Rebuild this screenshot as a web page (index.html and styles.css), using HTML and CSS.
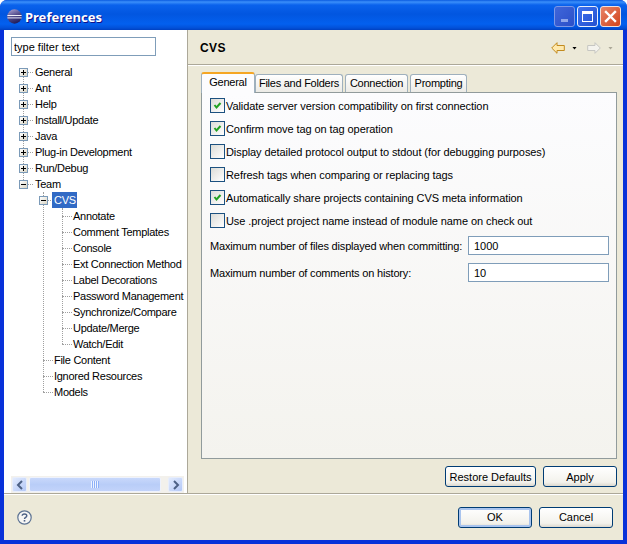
FILE: index.html
```html
<!DOCTYPE html>
<html lang="en">

<head>
    <meta charset="UTF-8">
    <meta name="viewport" content="width=device-width, initial-scale=1.0">
    <title>Preferences</title>
    <link rel="stylesheet" href="styles.css">
</head>

<body>
    <div class="window">
        <div class="titlebar">
            <svg class="app-icon" width="15" height="15" viewBox="0 0 15 15">
                <defs>
                    <linearGradient id="orb" x1="0.2" y1="0" x2="0.6" y2="1">
                        <stop offset="0" stop-color="#a79fd0" />
                        <stop offset="0.45" stop-color="#57508f" />
                        <stop offset="1" stop-color="#1f1a58" />
                    </linearGradient>
                </defs>
                <circle cx="7.5" cy="7.5" r="7.2" fill="url(#orb)" />
                <rect x="0.4" y="6" width="14.2" height="1" fill="#f0f0fa" />
                <rect x="0.4" y="8.4" width="14.2" height="1" fill="#e4e4f6" />
            </svg>
            <span class="title">Preferences</span>
            <div class="win-buttons">
                <div class="win-btn min"><span class="min-bar"></span></div>
                <div class="win-btn max"><span class="max-box"></span></div>
                <div class="win-btn close">
                    <svg width="13" height="13" viewBox="0 0 13 13">
                        <path d="M2 2 L11 11 M11 2 L2 11" stroke="#fff" stroke-width="2.4" stroke-linecap="square" />
                    </svg>
                </div>
            </div>
        </div>

        <div class="content">
            <div class="sidebar">
                <input class="filter" type="text" value="type filter text">
                <div class="tree-wrap">
                    <ul class="tree level-0">
                        <li><span class="toggle plus"></span><span class="label">General</span></li>
                        <li><span class="toggle plus"></span><span class="label">Ant</span></li>
                        <li><span class="toggle plus"></span><span class="label">Help</span></li>
                        <li><span class="toggle plus"></span><span class="label">Install/Update</span></li>
                        <li><span class="toggle plus"></span><span class="label">Java</span></li>
                        <li><span class="toggle plus"></span><span class="label">Plug-in Development</span></li>
                        <li><span class="toggle plus"></span><span class="label">Run/Debug</span></li>
                        <li><span class="toggle minus"></span><span class="label">Team</span>
                            <ul class="tree level-1">
                                <li><span class="toggle minus"></span><span class="label selected">CVS</span>
                                    <ul class="tree level-2">
                                        <li><span class="label">Annotate</span></li>
                                        <li><span class="label">Comment Templates</span></li>
                                        <li><span class="label">Console</span></li>
                                        <li><span class="label">Ext Connection Method</span></li>
                                        <li><span class="label">Label Decorations</span></li>
                                        <li><span class="label">Password Management</span></li>
                                        <li><span class="label">Synchronize/Compare</span></li>
                                        <li><span class="label">Update/Merge</span></li>
                                        <li><span class="label">Watch/Edit</span></li>
                                    </ul>
                                </li>
                                <li><span class="label">File Content</span></li>
                                <li><span class="label">Ignored Resources</span></li>
                                <li><span class="label">Models</span></li>
                            </ul>
                        </li>
                    </ul>
                </div>
                <div class="hscroll">
                    <div class="sb-btn">
                        <svg width="8" height="10" viewBox="0 0 8 10"><path d="M6 1 L2 5 L6 9" fill="none" stroke="#4d6185" stroke-width="2" /></svg>
                    </div>
                    <div class="sb-thumb"><span class="grip"></span></div>
                    <div class="sb-btn">
                        <svg width="8" height="10" viewBox="0 0 8 10"><path d="M2 1 L6 5 L2 9" fill="none" stroke="#4d6185" stroke-width="2" /></svg>
                    </div>
                </div>
            </div>

            <div class="main">
                <div class="page-header">
                    <h1>CVS</h1>
                    <div class="nav">
                        <svg width="14" height="12" viewBox="0 0 14 12">
                            <path d="M.7 6 L6 .7 V3.5 H13.3 V8.5 H6 V11.3 Z" fill="#ffe9ad" stroke="#c28b1e" />
                        </svg>
                        <span class="caret"></span>
                        <svg class="nav-fwd" width="14" height="12" viewBox="0 0 14 12">
                            <path d="M13.3 6 L8 .7 V3.5 H.7 V8.5 H8 V11.3 Z" fill="#f4f3ee" stroke="#c6c6c2" />
                        </svg>
                        <span class="caret off"></span>
                    </div>
                </div>

                <div class="page-body">
                    <div class="tabs">
                        <div class="tab active">General</div>
                        <div class="tab">Files and Folders</div>
                        <div class="tab">Connection</div>
                        <div class="tab">Prompting</div>
                    </div>
                    <div class="tab-panel">
                        <label class="check on">Validate server version compatibility on first connection</label>
                        <label class="check on">Confirm move tag on tag operation</label>
                        <label class="check">Display detailed protocol output to stdout (for debugging purposes)</label>
                        <label class="check">Refresh tags when comparing or replacing tags</label>
                        <label class="check on">Automatically share projects containing CVS meta information</label>
                        <label class="check">Use .project project name instead of module name on check out</label>
                        <div class="fields">
                            <span>Maximum number of files displayed when committing:</span>
                            <input type="text" value="1000">
                            <span>Maximum number of comments on history:</span>
                            <input type="text" value="10">
                        </div>
                    </div>
                    <div class="page-actions">
                        <button class="btn restore">Restore Defaults</button>
                        <button class="btn">Apply</button>
                    </div>
                </div>
            </div>
        </div>

        <div class="footer">
            <svg class="help" width="15" height="15" viewBox="0 0 15 15">
                <circle cx="7.5" cy="7.5" r="6.7" fill="#f6f6f4" stroke="#5d7393" stroke-width="1.2" />
                <path d="M5.2 5.8 C5.2 3.4 9.8 3.4 9.8 5.8 C9.8 7.4 7.5 7.4 7.5 9" fill="none" stroke="#4d6185" stroke-width="1.4" />
                <rect x="6.7" y="10" width="1.6" height="1.6" fill="#4d6185" />
            </svg>
            <div class="footer-actions">
                <button class="btn default">OK</button>
                <button class="btn">Cancel</button>
            </div>
        </div>
    </div>
</body>

</html>
```

FILE: styles.css
```css
* {
    margin: 0;
    padding: 0;
    box-sizing: border-box;
}

body {
    background-color: white;
    font-family: "Liberation Sans", sans-serif;
    font-size: 11px;
    letter-spacing: -0.12px;
    color: black;
    overflow: hidden;
}

ul {
    list-style: none;
}

.window {
    width: 627px;
    height: 544px;
    display: flex;
    flex-direction: column;
    background-color: #0831d9;
    border-radius: 7px 7px 0 0;
    overflow: hidden;
}

/* title bar */
.titlebar {
    height: 30px;
    flex: none;
    display: flex;
    align-items: center;
    padding: 2px 6px 0 7px;
    background: linear-gradient(to bottom, #0a5be0 0, #3b8ffa 2px, #0a62ec 5px, #0256e0 14px, #0360ef 24px, #0250d8 28px, #0040c0 30px);
}

.app-icon {
    flex: none;
}

.title {
    margin-left: 3px;
    margin-top: 1px;
    font-family: "Noto Sans", sans-serif;
    font-size: 13px;
    font-weight: 700;
    letter-spacing: 0;
    color: white;
    text-shadow: 1px 1px 0 #0f1089;
}

.win-buttons {
    margin-left: auto;
    display: flex;
    gap: 2px;
}

.win-btn {
    width: 21px;
    height: 21px;
    border: 1px solid #fff;
    border-radius: 3px;
    display: flex;
    align-items: center;
    justify-content: center;
}

.min {
    background: linear-gradient(135deg, #3f66da, #2b4fc8);
    border-color: #7c97e6;
    align-items: flex-end;
    padding-bottom: 4px;
}

.min-bar {
    width: 7px;
    height: 3px;
    background-color: #8fa6ea;
}

.max {
    background: linear-gradient(135deg, #3f72ee, #2450d0);
    border-color: #e8eefc;
}

.max-box {
    width: 11px;
    height: 11px;
    border: 1px solid white;
    border-top-width: 3px;
}

.close {
    background: linear-gradient(135deg, #e88468, #d1441c);
    border-color: #f0e0dc;
}

/* main area */
.content {
    flex: 1;
    min-height: 0;
    display: flex;
    margin: 0 4px;
    background-color: #ece9d8;
    border-bottom: 1px solid #aca899;
}

.sidebar {
    width: 183px;
    flex: none;
    background-color: white;
    display: flex;
    flex-direction: column;
    padding: 7px 3px 0 7px;
}

.filter {
    width: 145px;
    height: 19px;
    flex: none;
    border: 1px solid #7f9db9;
    padding: 0 2px;
    font: inherit;
}

.tree-wrap {
    flex: 1;
    min-height: 0;
    overflow: hidden;
    margin-top: 8px;
    margin-left: -7px;
    margin-right: -1px;
    letter-spacing: -0.28px;
}

.tree {
    position: relative;
}

.tree::before {
    content: "";
    position: absolute;
    border-left: 1px dotted #a0a0a0;
}

.level-0::before {
    left: 19px;
    top: 8px;
    height: 112px;
}

.level-1::before {
    left: 39px;
    top: 0;
    bottom: 8px;
}

.level-2::before {
    left: 58px;
    top: 0;
    bottom: 8px;
}

.tree li {
    position: relative;
    line-height: 16px;
    white-space: nowrap;
}

.tree li::before {
    content: "";
    position: absolute;
    top: 8px;
    width: 10px;
    border-top: 1px dotted #a0a0a0;
}

.level-0 > li::before {
    left: 19px;
}

.level-1 > li::before {
    left: 39px;
}

.level-2 > li::before {
    left: 58px;
}

.label {
    display: inline-block;
    height: 16px;
    padding: 0 2px;
    position: relative;
}

.level-0 > li > .label {
    margin-left: 29px;
}

.level-1 > li > .label {
    margin-left: 48px;
}

.level-2 > li > .label {
    margin-left: 67px;
}

.selected {
    background-color: #316ac5;
    color: white;
    width: 25px;
}

.toggle {
    position: absolute;
    z-index: 1;
    top: 4px;
    width: 9px;
    height: 9px;
    border: 1px solid #7b9ab8;
    background: linear-gradient(135deg, #fff, #d8d4c4);
}

.toggle::before {
    content: "";
    position: absolute;
    left: 1px;
    top: 3px;
    width: 5px;
    height: 1px;
    background-color: black;
}

.plus::after {
    content: "";
    position: absolute;
    left: 3px;
    top: 1px;
    width: 1px;
    height: 5px;
    background-color: black;
}

.level-0 > li > .toggle {
    left: 15px;
}

.level-1 > li > .toggle {
    left: 35px;
}

/* scrollbar */
.hscroll {
    height: 17px;
    flex: none;
    display: flex;
    align-items: center;
    gap: 2px;
    background-color: #f3f1ec;
    padding: 0 1px;
}

.sb-btn {
    width: 15px;
    height: 15px;
    flex: none;
    display: flex;
    align-items: center;
    justify-content: center;
    background: linear-gradient(135deg, #e2ebfe, #b4c8f6);
    border: 1px solid #e8eefc;
    border-radius: 2px;
}

.sb-thumb {
    width: 132px;
    height: 15px;
    margin-right: auto;
    display: flex;
    align-items: center;
    justify-content: center;
    background: linear-gradient(to bottom, #c8d8fb, #b9cdf8 50%, #c2d3fa);
    border: 1px solid #eef2fd;
    border-radius: 2px;
}

.grip {
    width: 8px;
    height: 7px;
    background: repeating-linear-gradient(to right, #eef3fe 0 1px, #8cb0f8 1px 2px);
}

/* right page */
.main {
    flex: 1;
    min-width: 0;
    border-left: 1px solid #aca899;
    display: flex;
    flex-direction: column;
}

.page-header {
    height: 35px;
    flex: none;
    display: flex;
    align-items: center;
    justify-content: space-between;
    padding: 2px 10px 0 12px;
    border-bottom: 1px solid #aca899;
    box-shadow: 0 1px 0 white;
}

.page-header h1 {
    font-size: 12px;
    font-weight: 700;
    letter-spacing: 0.4px;
}

.nav {
    display: flex;
    align-items: center;
}

.caret {
    width: 5px;
    height: 3px;
    margin-left: 7px;
    background-color: black;
    clip-path: polygon(0 0, 100% 0, 50% 100%);
}

.caret.off {
    background-color: #aca899;
}

.nav-fwd {
    margin-left: 10px;
}

.page-body {
    flex: 1;
    min-height: 0;
    padding: 6px 6px 0 13px;
}

.tabs {
    display: grid;
    grid-template-columns: 54px 88px 65px 59px;
    align-items: end;
    height: 21px;
    letter-spacing: -0.25px;
}

.tab {
    height: 18px;
    line-height: 17px;
    margin-left: 2px;
    text-align: center;
    white-space: nowrap;
    border: 1px solid #9fb0bd;
    border-bottom: 0;
    border-radius: 3px 3px 0 0;
    background: linear-gradient(to bottom, #fff, #ecebe6);
}

.tab.active {
    height: 21px;
    line-height: 17px;
    margin-left: 0;
    margin-bottom: -1px;
    position: relative;
    border-top: 2px solid #f5a623;
    background: #fcfcfe;
}

.tab:nth-child(2) {
    margin-left: 0;
}

.tab-panel {
    height: 367px;
    padding: 1px 7px 0 8px;
    border: 1px solid #919b9c;
    background: linear-gradient(to bottom, #fcfcfe, #f4f3ee);
    letter-spacing: -0.08px;
}

.check {
    display: flex;
    align-items: center;
    height: 23px;
    gap: 1px;
}

.check::before {
    content: "";
    width: 13px;
    height: 13px;
    flex: none;
    border: 1px solid #1c5180;
    background: linear-gradient(135deg, #dcdcd7, #fff);
}

.check.on::before {
    background: url("data:image/svg+xml,%3Csvg xmlns='http://www.w3.org/2000/svg' width='11' height='11'%3E%3Cpath d='M2.5 5 L4.5 7.5 L8.5 3' fill='none' stroke='%2321a121' stroke-width='2'/%3E%3C/svg%3E") center no-repeat, linear-gradient(135deg, #dcdcd7, #fff);
}

.fields {
    display: grid;
    grid-template-columns: 258px 141px;
    grid-auto-rows: 19px;
    row-gap: 8px;
    align-items: center;
    margin-top: 4px;
    white-space: nowrap;
    letter-spacing: -0.18px;
}

.fields input {
    width: 141px;
    height: 19px;
    border: 1px solid #7f9db9;
    padding: 0 5px;
    font: inherit;
    letter-spacing: 0;
}

.page-actions {
    display: flex;
    justify-content: flex-end;
    gap: 7px;
    margin-top: 7px;
}

.btn {
    width: 74px;
    height: 21px;
    font: inherit;
    color: black;
    border: 1px solid #003c74;
    border-radius: 3px;
    background: linear-gradient(to bottom, #fff, #f3f2ec 80%, #dcd8ce);
}

.restore {
    width: 91px;
}

.default {
    box-shadow: inset 0 0 0 2px #a9c4ee;
}

.footer {
    height: 46px;
    flex: none;
    margin: 0 4px 4px;
    background-color: #ece9d8;
    display: flex;
    align-items: center;
    padding: 0 10px 0 13px;
    box-shadow: inset 0 1px 0 white;
}

.help {
    flex: none;
}

.footer-actions {
    margin-left: auto;
    display: flex;
    gap: 7px;
}
```
